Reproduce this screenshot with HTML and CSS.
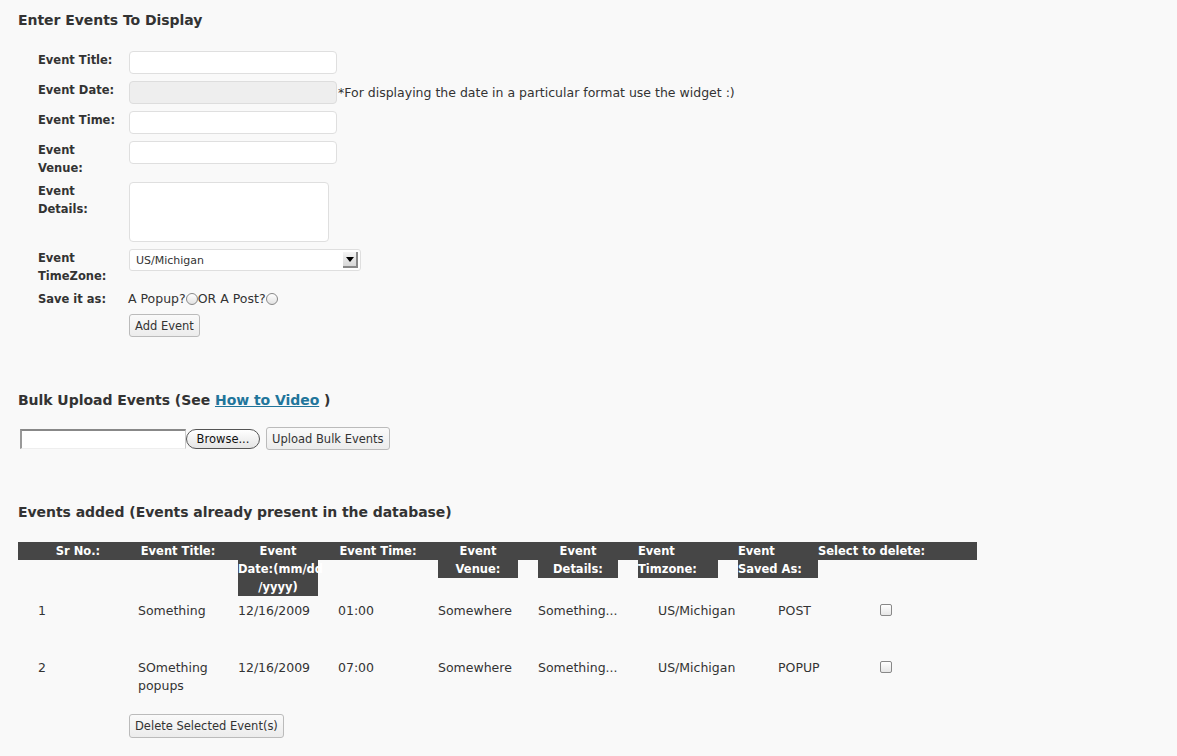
FILE: index.html
```html
<!DOCTYPE html>
<html>
<head>
<meta charset="utf-8">
<title>Events</title>
<link rel="stylesheet" href="styles.css">
</head>
<body>
<h2 class="heading first">Enter Events To Display</h2>
<div class="form">
  <label class="lbl">Event Title:</label>
  <div class="field"><input class="txt" type="text"></div>
  <label class="lbl">Event Date:</label>
  <div class="field"><input class="txt disabled" type="text" disabled><span class="hint">*For displaying the date in a particular format use the widget :)</span></div>
  <label class="lbl">Event Time:</label>
  <div class="field"><input class="txt" type="text"></div>
  <label class="lbl">Event<br>Venue:</label>
  <div class="field"><input class="txt" type="text"></div>
  <label class="lbl">Event<br>Details:</label>
  <div class="field"><textarea class="area"></textarea></div>
  <label class="lbl">Event<br>TimeZone:</label>
  <div class="field"><div class="select"><span class="sel-text">US/Michigan</span><span class="sel-arrow"></span></div></div>
  <label class="lbl">Save it as:</label>
  <div class="field radios">A Popup?<span class="radio"></span>OR A Post?<span class="radio"></span></div>
  <span></span>
  <div class="field"><button class="btn">Add Event</button></div>
</div>

<h2 class="heading bulk">Bulk Upload Events (See <a href="#" class="link">How to Video</a> )</h2>
<div class="upload">
  <span class="file-field"></span><span class="browse">Browse...</span><button class="btn up">Upload Bulk Events</button>
</div>

<h2 class="heading added">Events added (Events already present in the database)</h2>
<div class="table">
  <div class="thead">
    <div class="th c"><div class="thi">Sr No.:</div></div>
    <div class="th c"><div class="thi">Event Title:</div></div>
    <div class="th c"><div class="thi">Event<br>Date:(mm/dd<br>/yyyy)</div></div>
    <div class="th c"><div class="thi">Event Time:</div></div>
    <div class="th c"><div class="thi">Event<br>Venue:</div></div>
    <div class="th c"><div class="thi">Event<br>Details:</div></div>
    <div class="th l"><div class="thi">Event<br>Timzone:</div></div>
    <div class="th l"><div class="thi">Event<br>Saved As:</div></div>
    <div class="th l last"><div class="thi">Select to delete:</div></div>
  </div>
  <div class="tr">
    <div class="td">1</div>
    <div class="td">Something</div>
    <div class="td">12/16/2009</div>
    <div class="td">01:00</div>
    <div class="td">Somewhere</div>
    <div class="td">Something...</div>
    <div class="td p40">US/Michigan</div>
    <div class="td p60">POST</div>
    <div class="td chk"><span class="checkbox"></span></div>
  </div>
  <div class="tr">
    <div class="td">2</div>
    <div class="td">SOmething popups</div>
    <div class="td">12/16/2009</div>
    <div class="td">07:00</div>
    <div class="td">Somewhere</div>
    <div class="td">Something...</div>
    <div class="td p40">US/Michigan</div>
    <div class="td p60">POPUP</div>
    <div class="td chk"><span class="checkbox"></span></div>
  </div>
</div>
<div class="delete-row"><button class="btn del">Delete Selected Event(s)</button></div>
</body>
</html>
```

FILE: styles.css
```css
* { box-sizing: border-box; }
html, body { margin: 0; padding: 0; }
body {
  background: #f9f9f9;
  color: #333;
  font-family: "DejaVu Sans", "Liberation Sans", sans-serif;
  font-size: 12.5px;
  padding: 0 18px;
}
.heading {
  font-size: 14px;
  letter-spacing: -0.05px;
  font-weight: bold;
  line-height: 20px;
  margin: 0;
  color: #333;
}
.heading.first { padding-top: 10px; }
.form {
  display: grid;
  grid-template-columns: 91px auto;
  row-gap: 7px;
  align-items: start;
  margin: 21px 0 0 20px;
}
.lbl {
  font-weight: bold;
  line-height: 18px;
  font-size: 11.5px;
  margin-bottom: -2px;
}
.field { display: flex; align-items: center; }
.txt {
  width: 208px;
  height: 23px;
  border: 1px solid #dfdfdf;
  border-radius: 4px;
  background: #fff;
  margin: 0;
  font: inherit;
}
.txt.disabled { background: #eee; border-color: #ddd; }
.hint { font-size: 12.5px; margin-left: 1px; color: #333; }
.area {
  width: 200px;
  height: 60px;
  border: 1px solid #dfdfdf;
  border-radius: 4px;
  background: #fff;
  margin: 0;
  resize: none;
}
.select {
  width: 232px;
  height: 22px;
  border: 1px solid #dfdfdf;
  border-radius: 3px;
  background: #fff;
  display: flex;
  align-items: center;
  justify-content: space-between;
  padding: 0 2px 0 6px;
}
.sel-text { font-size: 11px; }
.sel-arrow {
  width: 15px;
  height: 16px;
  background: linear-gradient(#f4f4f4, #d8d8d8);
  border-right: 2px solid #888;
  border-bottom: 2px solid #888;
  position: relative;
}
.sel-arrow::after {
  content: "";
  position: absolute;
  left: 3px;
  top: 5px;
  border-left: 4px solid transparent;
  border-right: 4px solid transparent;
  border-top: 5px solid #000;
}
.radios { line-height: 17px; font-size: 12.5px; margin-left: -1px; }
.radio {
  display: inline-block;
  width: 12px;
  height: 12px;
  border: 1px solid #888;
  border-radius: 50%;
  background: linear-gradient(#fff, #e2e2e2);
  vertical-align: -2px;
}
.btn {
  font-family: inherit;
  font-size: 11.5px;
  color: #333;
  background: linear-gradient(#fafafa, #ececec);
  border: 1px solid #bbb;
  border-radius: 3px;
  height: 23px;
  padding: 0 5px;
  margin: 0;
}
.bulk { margin-top: 53px; }
.link { color: #21759b; text-decoration: underline; }
.upload {
  display: flex;
  align-items: center;
  margin-top: 17px;
  padding-left: 2px;
}
.file-field {
  width: 166px;
  height: 20px;
  background: #fff;
  border-top: 2px solid #888;
  border-left: 2px solid #999;
  border-right: 1px solid #ccc;
  border-bottom: 1px solid #eee;
}
.browse {
  width: 74px;
  height: 20px;
  border: 1px solid #555;
  border-radius: 10px;
  background: linear-gradient(#fff, #e4e4e4);
  font-size: 11.5px;
  color: #111;
  display: flex;
  align-items: center;
  justify-content: center;
}
.btn.up { margin-left: 6px; height: 23px; }
.added { margin-top: 52px; }
.table { width: 959px; margin-top: 20px; }
.thead {
  display: grid;
  grid-template-columns: 100px 100px 100px 100px 100px 100px 100px 100px 159px;
  background: linear-gradient(#464646, #464646) top left / 100% 18px no-repeat;
  color: #fff;
  font-weight: bold;
  font-size: 11.5px;
  line-height: 18px;
  white-space: nowrap;
}
.th { padding-left: 20px; }
.th.last { padding-left: 0; }
.thi { background: #464646; width: 80px; overflow: visible; }
.th.last .thi { width: auto; background: none; }
.th.c .thi { text-align: center; }
.th.l .thi { text-align: left; }
.tr {
  display: grid;
  grid-template-columns: 100px 100px 100px 100px 100px 100px 100px 100px 159px;
  min-height: 57px;
  padding-top: 6px;
  font-size: 12.5px;
  line-height: 18px;
  align-items: start;
}
.td { padding-left: 20px; padding-right: 10px; }
.td.p40 { padding-left: 40px; }
.td.p60 { padding-left: 60px; }
.td.chk { padding-left: 62px; padding-top: 2px; }
.checkbox {
  display: block;
  width: 12px;
  height: 12px;
  border: 1px solid #888;
  border-radius: 2px;
  background: linear-gradient(#fff, #e6e6e6);
}
.delete-row { padding-left: 111px; margin-top: 4px; }
.btn.del { height: 24px; }
```
